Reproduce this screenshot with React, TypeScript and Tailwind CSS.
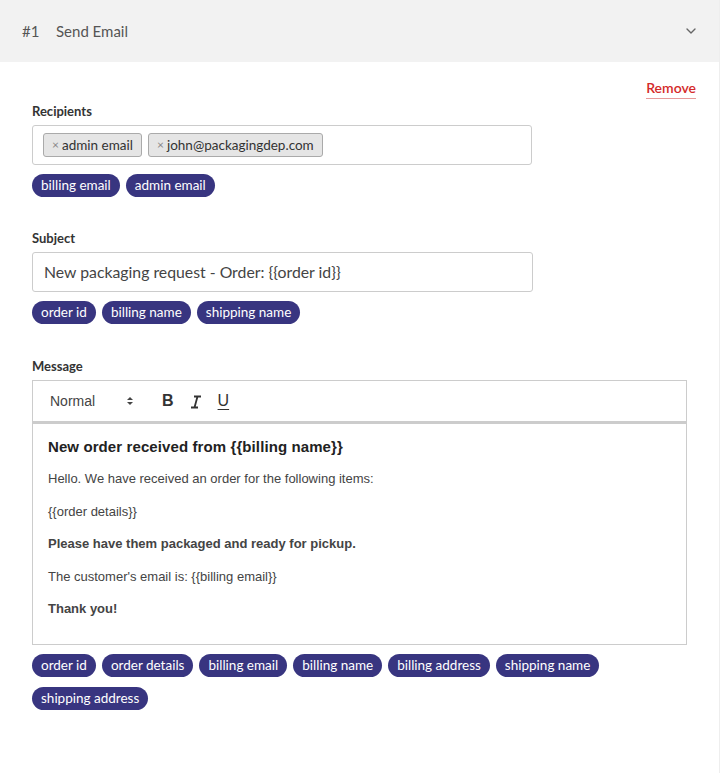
import { ChevronDown } from 'lucide-react';

const ui = { fontFamily: 'Lato, "Noto Sans", "Liberation Sans", sans-serif' };
const editorFont = { fontFamily: '"Liberation Sans", Arial, sans-serif' };

function Pills({ items }: { items: string[] }) {
  return (
    <div className="flex flex-wrap gap-x-[6px] gap-y-[10px] mt-[9px]">
      {items.map((item) => (
        <span
          key={item}
          className="h-[23px] px-[9px] rounded-full bg-[#383580] text-white text-[13.5px] leading-[23px]"
        >
          {item}
        </span>
      ))}
    </div>
  );
}

function Chip({ label }: { label: string }) {
  return (
    <span className="flex items-center h-[24px] px-[8px] rounded-[3px] bg-[#e5e5e5] border border-[#aaaaaa] text-[13.5px] text-[#333]">
      <span className="text-[#888] text-[12px] mr-[3px]">×</span>
      {label}
    </span>
  );
}

export default function App() {
  return (
    <div className="w-[720px] min-h-[773px] bg-white border-r border-[#eeeeee]" style={ui}>
      {/* Accordion header */}
      <div className="h-[62px] bg-[#f2f2f2] flex items-center px-[22px] text-[15px] text-[#555]">
        <span className="w-[34px]">#1</span>
        <span>Send Email</span>
        <ChevronDown className="ml-auto mr-[-2px] w-[16px] h-[16px] text-[#666]" strokeWidth={2} />
      </div>

      <div className="pl-[32px] pr-[23px] pt-[16px]">
        <div className="flex justify-end">
          <button className="text-[14px] text-[#d42a2a] border-b border-[#e69a9a] leading-[19px] pb-[1px] font-semibold">
            Remove
          </button>
        </div>

        {/* Recipients */}
        <div className="text-[13px] font-bold text-[#333] mt-[3px] leading-[18px]">Recipients</div>
        <div className="w-[500px] h-[40px] mt-[5px] border border-[#cccccc] rounded-[3px] flex items-center gap-[6px] px-[10px]">
          <Chip label="admin email" />
          <Chip label="john@packagingdep.com" />
        </div>
        <Pills items={['billing email', 'admin email']} />

        {/* Subject */}
        <div className="text-[13px] font-bold text-[#333] mt-[32px] leading-[18px]">Subject</div>
        <div className="w-[501px] h-[40px] mt-[5px] border border-[#cccccc] rounded-[3px] flex items-center px-[11px] text-[15.8px] text-[#444]">
          New packaging request - Order: {'{{order id}}'}
        </div>
        <Pills items={['order id', 'billing name', 'shipping name']} />

        {/* Message */}
        <div className="text-[13px] font-bold text-[#333] mt-[33px] leading-[18px]">Message</div>
        <div className="w-[655px] mt-[5px]" style={editorFont}>
          <div className="h-[42px] border border-[#cccccc] flex items-center px-[17px] text-[14px] text-[#444]">
            <span className="w-[85px] flex items-center justify-between pr-[1px]">
              Normal
              <svg width="8" height="12" viewBox="0 0 8 12">
                <path d="M1 5 L4 2 L7 5 Z" fill="#444" />
                <path d="M1 7 L4 10 L7 7 Z" fill="#444" />
              </svg>
            </span>
            <span className="ml-[27px] font-bold text-[16px] text-[#333]">B</span>
            <span className="ml-[16px] flex">
              <svg width="12" height="14" viewBox="0 0 12 14" className="mt-[1px]">
                <path d="M4 1.5 H11 M1 12.5 H8 M7.5 1.5 L4.5 12.5" stroke="#333" strokeWidth="1.8" fill="none" />
              </svg>
            </span>
            <span className="ml-[16px] text-[16px] text-[#333] underline underline-offset-[3px]">U</span>
          </div>
          <div className="h-[223px] border border-t-2 border-[#cccccc] px-[15px] pt-[13px] text-[#444]">
            <div className="text-[15px] font-bold text-[#222] leading-[20px] tracking-[0.1px]">
              New order received from {'{{billing name}}'}
            </div>
            <div className="text-[13px] leading-[19px] mt-[12px] space-y-[13.5px]">
              <p>Hello. We have received an order for the following items:</p>
              <p>{'{{order details}}'}</p>
              <p className="font-bold">Please have them packaged and ready for pickup.</p>
              <p>The customer's email is: {'{{billing email}}'}</p>
              <p className="font-bold">Thank you!</p>
            </div>
          </div>
        </div>
        <Pills
          items={[
            'order id',
            'order details',
            'billing email',
            'billing name',
            'billing address',
            'shipping name',
            'shipping address',
          ]}
        />
      </div>
    </div>
  );
}
